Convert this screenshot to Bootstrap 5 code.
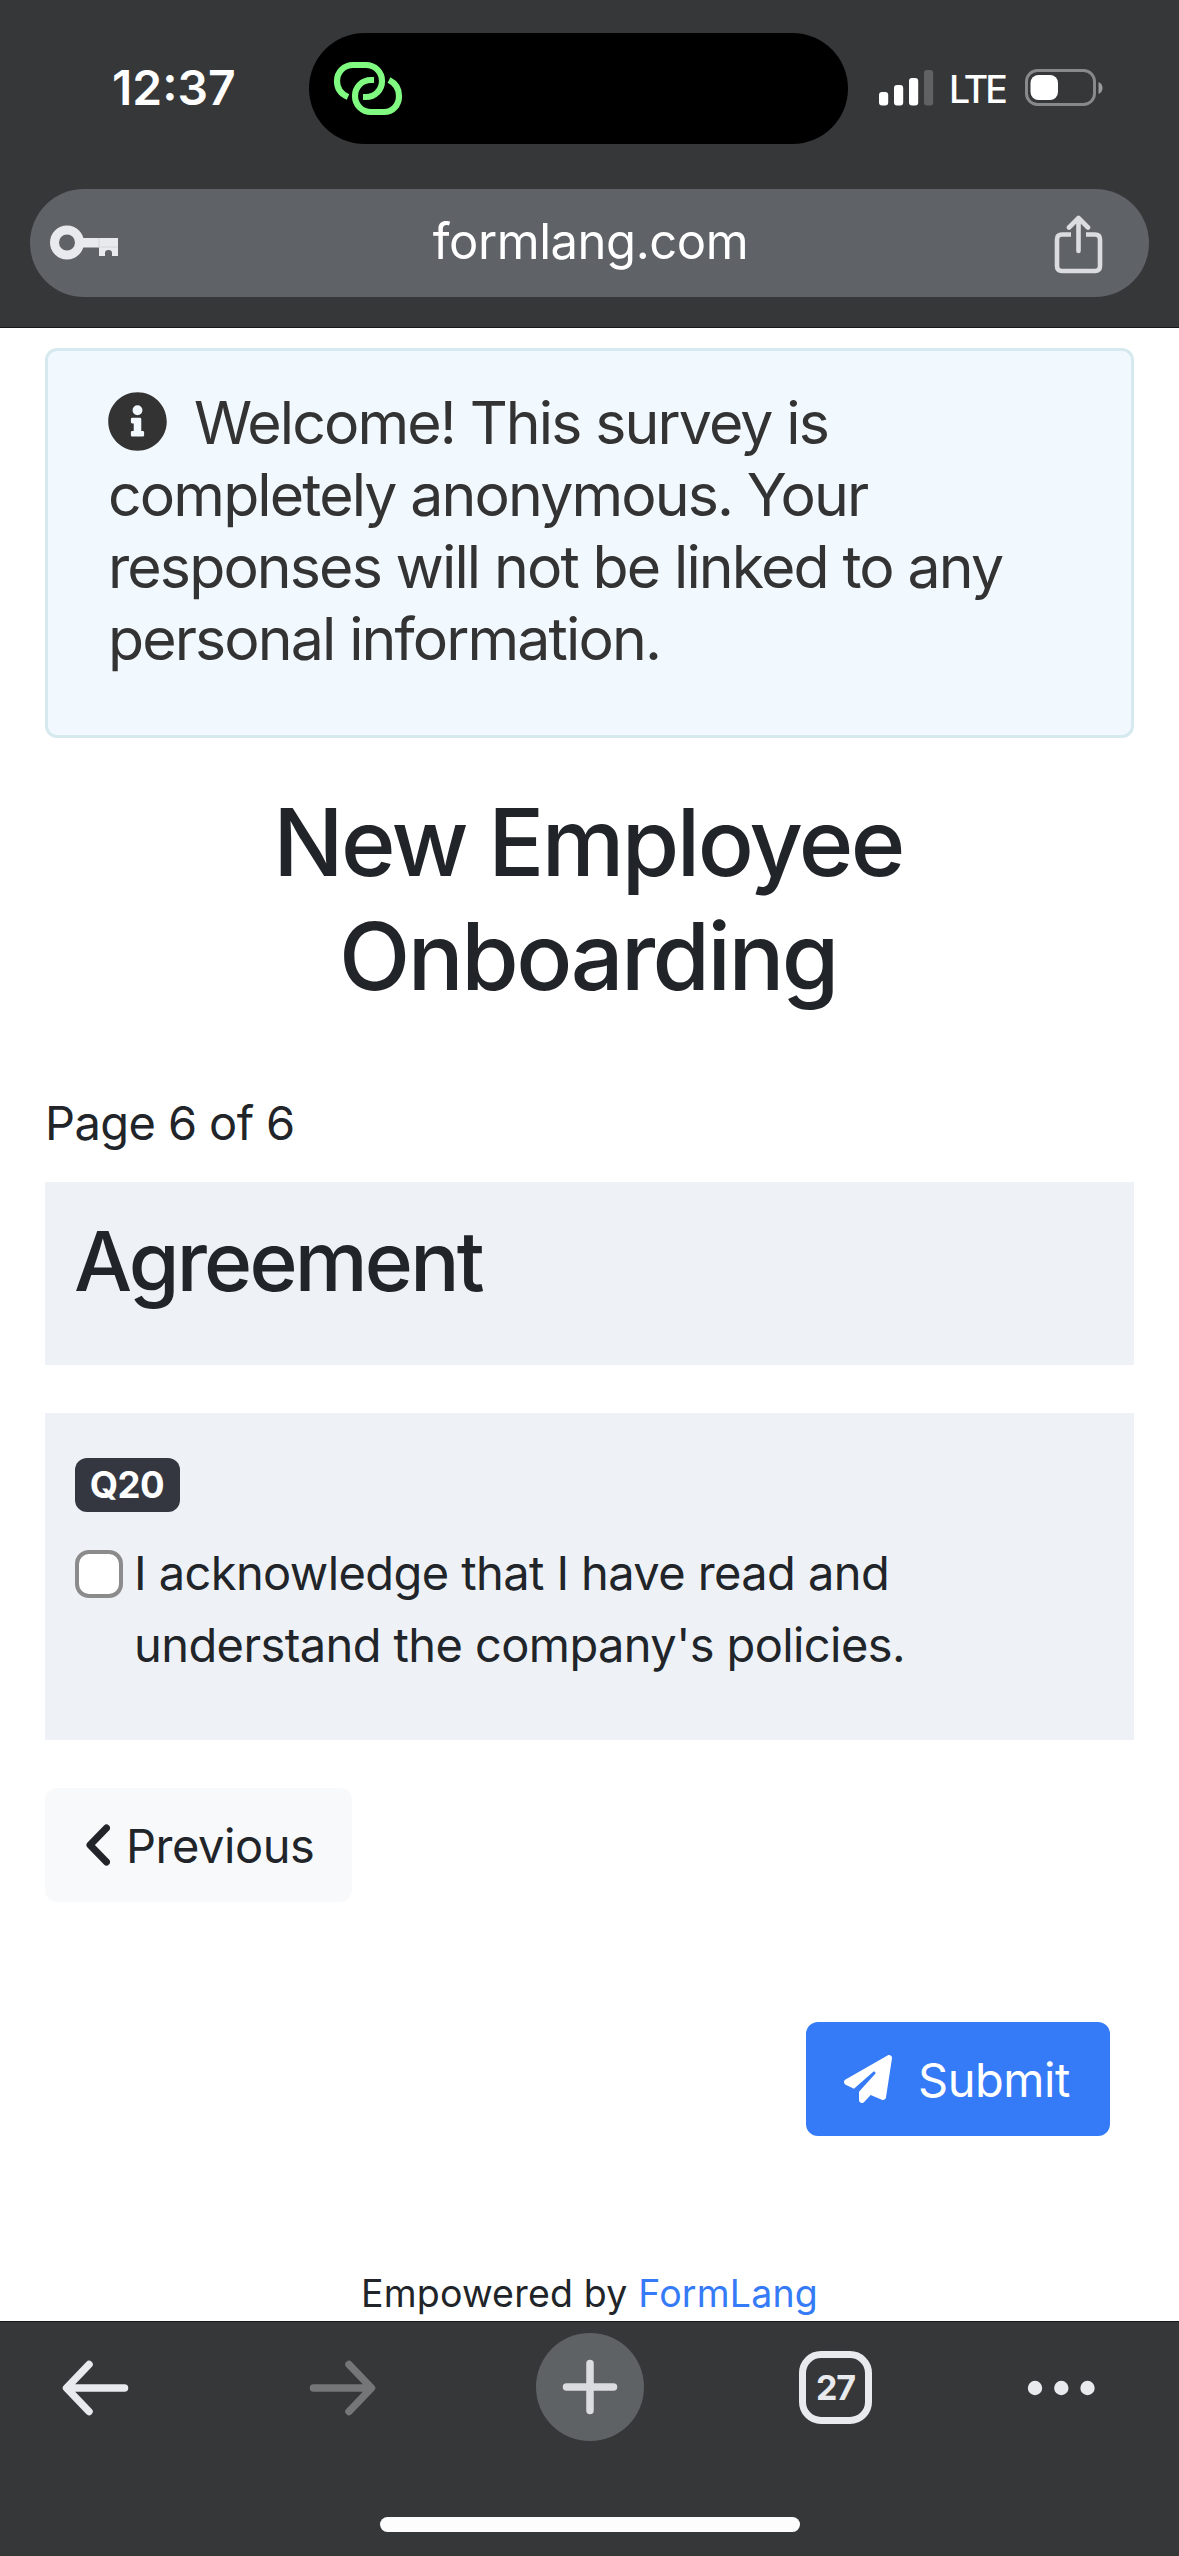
<!DOCTYPE html>
<html lang="en">
<head>
<meta charset="utf-8">
<meta name="viewport" content="width=device-width, initial-scale=1">
<title>New Employee Onboarding</title>
<link rel="stylesheet" href="https://cdn.jsdelivr.net/npm/bootstrap@5.3.0/dist/css/bootstrap.min.css">
<style>
  body { font-family: Inter, "Liberation Sans", sans-serif; font-size: 47px; line-height: 72px; letter-spacing: -.59px; color: #212529; width: 1179px; height: 2556px; overflow: hidden; background: #fff; }
  svg { display: block; flex: none; }
  .browser-top { height: 328px; background: #363739; border-bottom: 1px solid #17181a; color: #fff; }
  .status-row { height: 177px; }
  .clock { width: 309px; padding-left: 112px; font-size: 48px; font-weight: 600; letter-spacing: 0; margin-top: -2px; }
  .island { width: 539px; height: 111px; background: #000; padding-left: 24px; }
  .signals { padding-left: 31px; margin-top: -1px; }
  .lte { font-size: 37.5px; font-weight: 500; letter-spacing: -2.9px; margin-left: 15px; margin-top: 3px; width: 76px; }
  .address { height: 108px; margin: 12px 30px 0; background: #5f6267; padding: 0 45px 0 20px; }
  .address-text { font-size: 49px; letter-spacing: -.46px; margin: -2px 0 0 9px; }
  .page-body { height: 1993px; padding: 20px 45px 0; }
  .notice { height: 390px; padding: 36px 60px; border: 3px solid #d6e9ee; border-radius: 12px; background: #f1f8fe; color: #333; font-size: 59px; letter-spacing: -1.88px; margin: 0; }
  .notice svg { display: inline-block; vertical-align: -7px; margin-right: 27px; }
  .survey-title { font-size: 93px; font-weight: 500; line-height: 114px; letter-spacing: -2.55px; margin: 47px 3px 0 0; }
  .page-count { margin-top: 74px; }
  .panel { background: #eef2f6; padding-left: 30px; }
  .panel-head { height: 183px; margin-top: 23px; padding-top: 29px; }
  .panel-head h2 { font-size: 82px; font-weight: 500; line-height: 101px; letter-spacing: -2.8px; margin: 0 0 0 -1px; }
  .panel-question { height: 327px; margin-top: 48px; padding-top: 45px; }
  .q-badge { width: 105px; height: 54px; font-size: 36.5px; line-height: 54px; padding: 0 1px 0 0; border-radius: 12px; background: #343740; letter-spacing: -.5px; }
  .answer { margin-top: 25px; }
  .answer .tick { width: 48px; height: 48px; margin: 13px 11px 0 0; border: 4px solid #8b8b8c; border-radius: 14px; float: none; flex: none; background: #fff; }
  .btn-page { height: 114px; border: 0; border-radius: 12px; font-size: 47px; letter-spacing: -.46px; padding: 0; line-height: 72px; }
  .btn-prev { width: 307px; margin-top: 48px; padding: 2px 0 0 41px; background: #f8f9fb; color: #212529; }
  .btn-prev svg { margin-right: 16px; margin-top: -2px; }
  .btn-send { width: 304px; margin: 120px 24px 0 0; padding: 2px 0 0 38px; background: #357af6; }
  .btn-send svg { margin-right: 26px; margin-top: -2px; }
  .credit { font-size: 37.5px; line-height: 58px; letter-spacing: .2px; margin-top: 129px; }
  .credit a { color: #357af6; }
  .browser-bottom { height: 235px; background: #363739; border-top: 1px solid #17181a; }
  .tools { padding: 11px 0 0 62px; height: 119px; }
  .tools .nav-glyph { margin-top: 1px; }
  .plus { width: 108px; height: 108px; background: #5f6265; margin-left: 160px; }
  .tabs-count { width: 73px; height: 73px; border: 7px solid #e9eaed; border-radius: 22px; margin-left: 155px; margin-top: 1px; color: #e9eaed; font-size: 34px; font-weight: 700; letter-spacing: -1.2px; line-height: 60px; }
  .forward { margin-left: 180px; }
  .more { margin-left: 155px; }
  .home-bar { width: 420px; height: 15px; background: #fdfdfd; margin-top: 76px; }
</style>
<script src="https://cdn.jsdelivr.net/npm/bootstrap@5.3.0/dist/js/bootstrap.bundle.min.js"></script>
</head>
<body>
<header class="browser-top">
  <div class="status-row d-flex align-items-center">
    <div class="clock">12:37</div>
    <div class="island rounded-pill d-flex align-items-center">
      <svg width="70" height="56" viewBox="333 61 70 56" fill="none" stroke="#80fa80" stroke-width="6.2">
        <path d="M348 97C341 94 337 88 337 81C337 72 344 65 353 65H366C375 65 382 72 382 81C382 90 375 97 366 97H363"/>
        <path d="M374 80H371C362 80 355 87 355 96C355 105 362 112 371 112H384C393 112 399 105 399 96C399 88 395 83 389 80"/>
      </svg>
    </div>
    <div class="signals d-flex align-items-center">
      <svg width="55" height="36" viewBox="0 0 55 36" fill="#fff">
        <rect x="0" y="22" width="9.2" height="13.5" rx="3"/><rect x="15" y="15" width="9.2" height="20.5" rx="3"/><rect x="30" y="8" width="9.2" height="27.5" rx="3"/><rect x="45" y="0" width="9.2" height="35.5" rx="3" fill="#606163"/>
      </svg>
      <span class="lte">LTE</span>
      <svg width="80" height="38" viewBox="0 0 80 38">
        <rect x="1.5" y="1.5" width="68" height="34" rx="11" fill="none" stroke="#88898b" stroke-width="3"/>
        <rect x="5.5" y="6" width="27.5" height="25" rx="8" fill="#fff"/>
        <path d="M73.500 13V25C76 24 77.500 22 77.500 19S76 14 73.500 13Z" fill="#9b9c9e"/>
      </svg>
    </div>
  </div>
  <div class="address rounded-pill d-flex align-items-center justify-content-between">
    <svg width="68" height="36" viewBox="0 0 68 36">
      <circle cx="17" cy="17.500" r="12.500" fill="none" stroke="#e8eaee" stroke-width="9"/>
      <path d="M33 13H68V31H62V28Q62 25 58.500 25T55 28V31H49V22.500H33Z" fill="#e8eaee"/>
      <path d="M49 13V22.500M49 22H68" stroke="#cfd1d5" stroke-width=".8" fill="none"/>
    </svg>
    <span class="address-text">formlang.com</span>
    <svg width="50" height="60" viewBox="0 0 50 60" fill="none" stroke="#dadce0" stroke-width="4.600" class="mt-1">
      <path d="M17 19.500H8Q3 19.500 3 24.500V51Q3 56 8 56H41Q46 56 46 51V24.500Q46 19.500 41 19.500H32"/>
      <path d="M24.500 36V3M15 12.500L24.500 3L34 12.500" stroke-linecap="round" stroke-linejoin="round"/>
    </svg>
  </div>
</header>

<main class="page-body">
  <div class="notice alert" role="alert">
    <svg width="59" height="59" viewBox="6 6 500 500" fill="#333"><path d="M256 8C119 8 8 119 8 256s111 248 248 248 248-111 248-248S393 8 256 8zm0 110a42 42 0 1 1 0 84 42 42 0 1 1 0-84zm56 254a12 12 0 0 1-12 12h-88a12 12 0 0 1-12-12v-24a12 12 0 0 1 12-12h12v-64h-12a12 12 0 0 1-12-12v-24a12 12 0 0 1 12-12h64a12 12 0 0 1 12 12v100h12a12 12 0 0 1 12 12z"/></svg>Welcome! This survey is<br>completely anonymous. Your<br>responses will not be linked to any<br>personal information.
  </div>

  <h1 class="survey-title text-center">New Employee<br>Onboarding</h1>

  <div class="page-count">Page 6 of 6</div>

  <section class="panel panel-head"><h2>Agreement</h2></section>

  <section class="panel panel-question">
    <span class="q-badge badge d-block text-center">Q20</span>
    <div class="answer form-check d-flex align-items-start p-0 mb-0">
      <input class="tick form-check-input" type="checkbox" id="ack">
      <label class="form-check-label" for="ack">I acknowledge that I have read and<br>understand the company's policies.</label>
    </div>
  </section>

  <button type="button" class="btn btn-light btn-page btn-prev d-flex align-items-center">
    <svg width="24" height="42" viewBox="0 0 24 42" fill="none" stroke="#212529" stroke-width="7" stroke-linecap="round" stroke-linejoin="round"><path d="M20.500 4L4 21L20.500 38"/></svg>Previous
  </button>

  <div class="d-flex justify-content-end">
    <button type="button" class="btn btn-primary btn-page btn-send d-flex align-items-center">
      <svg width="48" height="48" viewBox="0 0 512 512" fill="#fff"><path d="M498.100 5.600c10.100 7 15.400 19.100 13.500 31.200l-64 416c-1.500 9.700-7.400 18.200-16 23s-18.900 5.400-28 1.600L284 427.700l-68.500 74.100c-8.900 9.700-22.900 12.900-35.200 8.100S160 493.200 160 480V396.400c0-4 1.500-7.800 4.200-10.700L331.800 202.800c5.800-6.300 5.600-16-.4-22s-15.700-6.400-22-.7L106 360.800 17.700 316.600C7.100 311.300 .3 300.700 0 288.900s5.900-22.800 16.100-28.700l448-256c10.700-6.100 23.900-5.500 34 1.400z"/></svg>Submit
    </button>
  </div>

  <div class="credit text-center">Empowered by <a href="#" class="text-decoration-none">FormLang</a></div>
</main>

<footer class="browser-bottom">
  <nav class="tools d-flex align-items-center">
    <svg class="nav-glyph" width="67" height="56" viewBox="0 0 67 56" fill="none" stroke="#e9eaed" stroke-width="7.500" stroke-linecap="round" stroke-linejoin="round"><path d="M62.500 28H5M27 4.500L4.500 28L27 51.500"/></svg>
    <svg class="nav-glyph forward" width="67" height="56" viewBox="0 0 67 56" fill="none" stroke="#757678" stroke-width="7.500" stroke-linecap="round" stroke-linejoin="round"><path d="M4.500 28H62M40 4.500L62.500 28L40 51.500"/></svg>
    <div class="plus rounded-circle d-flex align-items-center justify-content-center">
      <svg width="56" height="56" viewBox="0 0 56 56" stroke="#dadce0" stroke-width="7.500" stroke-linecap="round"><path d="M28 4.500V51.500M4.500 28H51.500"/></svg>
    </div>
    <div class="tabs-count text-center">27</div>
    <svg class="nav-glyph more" width="68" height="16" viewBox="0 0 68 16" fill="#e9eaed"><circle cx="8" cy="8" r="7.200"/><circle cx="34.300" cy="8" r="7.200"/><circle cx="60.500" cy="8" r="7.200"/></svg>
  </nav>
  <div class="home-bar rounded-pill mx-auto"></div>
</footer>
</body>
</html>
